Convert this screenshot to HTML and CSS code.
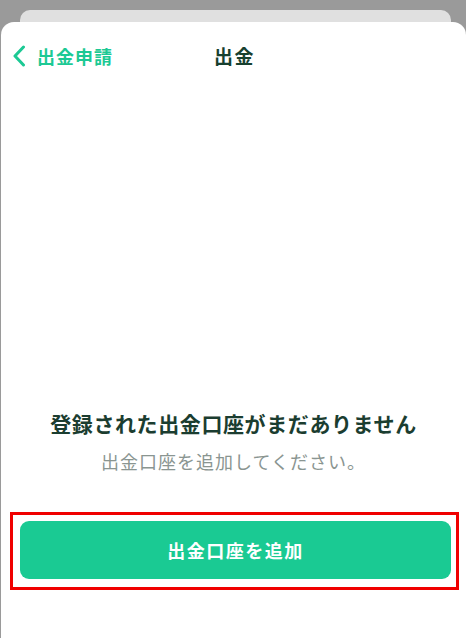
FILE: index.html
```html
<!DOCTYPE html>
<html lang="ja">
<head>
<meta charset="utf-8">
<title>出金</title>
<link rel="stylesheet" href="styles.css">
</head>
<body>
<div class="screen">
  <div class="back-card"></div>
  <div class="sheet">
    <header class="nav">
      <a class="nav-back" href="#">
        <svg class="chev" width="14" height="22" viewBox="0 0 14 22" aria-hidden="true">
          <polyline points="11.5,2 3,11 11.5,20" fill="none" stroke="#1cc994" stroke-width="3" stroke-linecap="round" stroke-linejoin="round"/>
        </svg>
        <span>出金申請</span>
      </a>
      <h1 class="nav-title">出金</h1>
      <div></div>
    </header>
    <main class="empty">
      <p class="empty-title">登録された出金口座がまだありません</p>
      <p class="empty-sub">出金口座を追加してください。</p>
    </main>
    <div class="highlight">
      <button class="add-btn" type="button">出金口座を追加</button>
    </div>
  </div>
</div>
</body>
</html>
```

FILE: styles.css
```css
* { box-sizing: border-box; }
html, body {
  margin: 0;
  padding: 0;
  background: #9a9a9a;
  font-family: "Noto Sans CJK JP", "Noto Sans", sans-serif;
}
.screen {
  width: 466px;
  height: 638px;
  padding-top: 10px;
  display: flex;
  flex-direction: column;
  overflow: hidden;
}
.back-card {
  height: 12px;
  margin: 0 15px 0 20px;
  background: #e0e0e0;
  border-radius: 10px 10px 0 0;
  flex: none;
}
.sheet {
  flex: 1;
  margin-left: 1px;
  background: #ffffff;
  border-radius: 13px 13px 0 0;
  display: flex;
  flex-direction: column;
}
.nav {
  height: 68px;
  display: grid;
  grid-template-columns: 1fr auto 1fr;
  align-items: center;
  padding: 0 11px;
}
.nav-back {
  display: flex;
  align-items: center;
  gap: 11px;
  color: #1cc994;
  text-decoration: none;
  font-size: 18px;
  font-weight: 700;
  letter-spacing: 1px;
  line-height: 24px;
}
.chev { display: block; }
.nav-title {
  margin: 0;
  padding-left: 2px;
  font-size: 19px;
  font-weight: 700;
  letter-spacing: 1.5px;
  line-height: 24px;
  color: #17402f;
}
.empty {
  padding-top: 318px;
  text-align: center;
}
.empty-title {
  margin: 0;
  font-size: 21px;
  font-weight: 700;
  letter-spacing: 0.6px;
  line-height: 30px;
  color: #1b3d30;
}
.empty-sub {
  margin: 11px 0 0;
  font-size: 18px;
  letter-spacing: 1px;
  line-height: 24px;
  color: #8a9591;
}
.highlight {
  margin: 39px 0 0 9px;
  width: 449px;
  border: 3px solid #f00000;
  padding: 6px 5px 8px 7px;
}
.add-btn {
  display: block;
  width: 100%;
  height: 58px;
  border: 0;
  border-radius: 9px;
  background: #1aca93;
  color: #ffffff;
  font-family: inherit;
  font-size: 18px;
  font-weight: 700;
  letter-spacing: 1.5px;
  padding: 0;
}
```
